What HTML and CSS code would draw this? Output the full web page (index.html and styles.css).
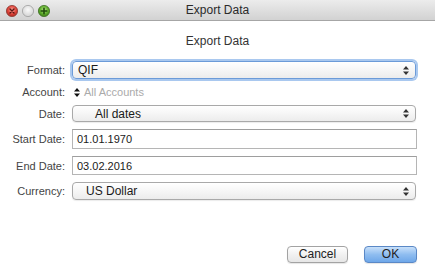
FILE: index.html
```html
<!DOCTYPE html>
<html lang="en">
<head>
  <meta charset="UTF-8">
  <title>Export Data</title>
  <link rel="stylesheet" href="styles.css">
</head>
<body>
  <div class="window">
    <div class="titlebar">
      <div class="lights">
        <svg width="14" height="14" viewBox="0 0 14 14">
          <defs>
            <radialGradient id="red" cx="50%" cy="40%" r="60%">
              <stop offset="0" stop-color="#f7a59c"/>
              <stop offset="0.6" stop-color="#e0443a"/>
              <stop offset="1" stop-color="#a8261e"/>
            </radialGradient>
          </defs>
          <circle cx="7" cy="7" r="5.6" fill="url(#red)" stroke="#8e3a32" stroke-width="0.8"/>
          <path d="M5 5 L9 9 M9 5 L5 9" stroke="#5a1510" stroke-width="1.4" stroke-linecap="round"/>
        </svg>
        <svg width="14" height="14" viewBox="0 0 14 14">
          <defs>
            <radialGradient id="grey" cx="50%" cy="40%" r="60%">
              <stop offset="0" stop-color="#fafafa"/>
              <stop offset="1" stop-color="#d2d2d2"/>
            </radialGradient>
          </defs>
          <circle cx="7" cy="7" r="5.6" fill="url(#grey)" stroke="#a0a0a0" stroke-width="0.8"/>
        </svg>
        <svg width="14" height="14" viewBox="0 0 14 14">
          <defs>
            <radialGradient id="green" cx="50%" cy="40%" r="60%">
              <stop offset="0" stop-color="#b8e58a"/>
              <stop offset="0.6" stop-color="#5fae2c"/>
              <stop offset="1" stop-color="#3a7a17"/>
            </radialGradient>
          </defs>
          <circle cx="7" cy="7" r="5.6" fill="url(#green)" stroke="#3f6e24" stroke-width="0.8"/>
          <path d="M7 4.2 L7 9.8 M4.2 7 L9.8 7" stroke="#1f4a0c" stroke-width="1.6" stroke-linecap="round"/>
        </svg>
      </div>
      <div class="title">Export Data</div>
    </div>

    <h1 class="heading">Export Data</h1>

    <div class="form">
      <label class="label">Format:</label>
      <div class="select focused">
        <span class="value v-format">QIF</span>
        <svg class="arrows" width="6" height="9" viewBox="0 0 6 9"><path d="M3 0 L6 3.5 L0 3.5 Z M3 9 L6 5.5 L0 5.5 Z" fill="#333"/></svg>
      </div>

      <label class="label">Account:</label>
      <div class="account">
        <svg width="6" height="9" viewBox="0 0 6 9"><path d="M3 0 L6 3.5 L0 3.5 Z M3 9 L6 5.5 L0 5.5 Z" fill="#111"/></svg>
        <span>All Accounts</span>
      </div>

      <label class="label">Date:</label>
      <div class="select">
        <span class="value v-date">All dates</span>
        <svg class="arrows" width="6" height="9" viewBox="0 0 6 9"><path d="M3 0 L6 3.5 L0 3.5 Z M3 9 L6 5.5 L0 5.5 Z" fill="#333"/></svg>
      </div>

      <label class="label">Start Date:</label>
      <div class="field">01.01.1970</div>

      <label class="label">End Date:</label>
      <div class="field">03.02.2016</div>

      <label class="label">Currency:</label>
      <div class="select">
        <span class="value v-currency">US Dollar</span>
        <svg class="arrows" width="6" height="9" viewBox="0 0 6 9"><path d="M3 0 L6 3.5 L0 3.5 Z M3 9 L6 5.5 L0 5.5 Z" fill="#333"/></svg>
      </div>
    </div>

    <div class="buttons">
      <button class="btn">Cancel</button>
      <button class="btn primary">OK</button>
    </div>
  </div>
</body>
</html>
```

FILE: styles.css
```css
body {
  margin: 0;
  padding: 0;
  background: #fff;
  font-family: "Liberation Sans", Arial, sans-serif;
  color: #222;
}

.window {
  width: 435px;
  height: 280px;
  background: #fff;
  overflow: hidden;
}

.titlebar {
  height: 20px;
  background: linear-gradient(#ececec, #d2d2d2);
  border-bottom: 1px solid #a6a6a6;
  display: flex;
  align-items: center;
  position: relative;
}

.lights {
  display: flex;
  gap: 2px;
  padding-left: 5px;
  position: absolute;
  left: 0;
  top: 4px;
}

.title {
  flex: 1;
  text-align: center;
  font-size: 12px;
  color: #2a2a2a;
}

.heading {
  margin: 13px 0 0;
  font-size: 12px;
  font-weight: normal;
  line-height: 14px;
  text-align: center;
  color: #333;
}

.form {
  display: grid;
  grid-template-columns: 65px 344px;
  grid-template-rows: 18px 12px 17px 20px 19px 18px;
  column-gap: 7px;
  row-gap: 7px;
  margin-top: 13px;
}

.label {
  font-size: 11px;
  color: #444;
  display: flex;
  align-items: center;
  justify-content: flex-end;
}

.select {
  display: flex;
  align-items: center;
  justify-content: space-between;
  border: 1px solid #a9a9a9;
  border-radius: 4px;
  background: linear-gradient(#ffffff, #f6f6f6 50%, #ececec);
  box-shadow: 0 1px 1px rgba(0, 0, 0, 0.08);
  padding-right: 6px;
  box-sizing: border-box;
}

.select.focused {
  border-color: #6c9bd8;
  box-shadow: 0 0 0 2px #a9c8ef;
}

.value {
  font-size: 12px;
  color: #1a1a1a;
}

.v-format { padding-left: 5px; }
.v-date { padding-left: 22px; }
.v-currency { padding-left: 13px; }

.account {
  display: flex;
  align-items: center;
  gap: 4px;
  padding-left: 2px;
  font-size: 11px;
  color: #aaa;
}

.field {
  border: 1px solid #b5b5b5;
  border-top-color: #9e9e9e;
  background: #fff;
  font-size: 11px;
  color: #1a1a1a;
  padding-left: 4px;
  display: flex;
  align-items: center;
  box-sizing: border-box;
  margin-right: -1px;
}

.buttons {
  display: flex;
  justify-content: flex-end;
  gap: 16px;
  padding-right: 18px;
  margin-top: 46px;
}

.btn {
  height: 17px;
  width: 61px;
  font-family: "Liberation Sans", Arial, sans-serif;
  font-size: 12px;
  color: #222;
  border: 1px solid #a3a3a3;
  border-radius: 4px;
  background: linear-gradient(#ffffff, #f1f1f1 50%, #e6e6e6);
  box-shadow: 0 1px 1px rgba(0, 0, 0, 0.1);
  padding: 0;
  line-height: 15px;
}

.btn.primary {
  width: 53px;
  border-color: #5a88c6;
  background: linear-gradient(#c8e0fa, #8fbdf0 50%, #6ea7e9);
}
```
